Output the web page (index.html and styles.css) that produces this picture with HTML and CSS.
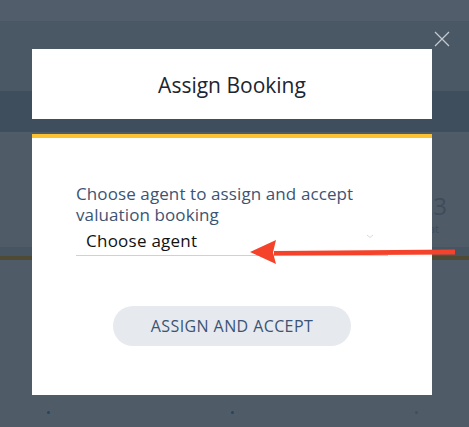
FILE: index.html
```html
<!DOCTYPE html>
<html lang="en">
<head>
    <meta charset="UTF-8">
    <meta name="viewport" content="width=device-width, initial-scale=1.0">
    <title>Assign Booking</title>
    <link rel="stylesheet" href="styles.css">
</head>
<body>
    <div id="page">
        <div class="topbar"></div>
        <div class="subbar"></div>
        <div class="strip"></div>
        <div class="content">
            <div class="stat">
                <span class="stat-num">23</span>
                <span class="stat-label">at</span>
            </div>
        </div>
        <div class="rule"></div>
        <div class="olive"></div>
        <div class="footer">
            <span class="dot"></span>
            <span class="dot"></span>
            <span class="dot dim"></span>
        </div>
    </div>

    <button class="close" aria-label="Close">
        <svg width="16" height="16" viewBox="0 0 16 16">
            <path d="M1 1 L15 15 M15 1 L1 15" stroke="#c3c9d0" stroke-width="1.3" fill="none"/>
        </svg>
    </button>

    <div class="modal">
        <div class="modal-header">
            <h1>Assign Booking</h1>
        </div>
        <div class="modal-body">
            <label for="agent">Choose agent to assign and accept valuation booking</label>
            <div class="select">
                <span>Choose agent</span>
                <svg width="8" height="5" viewBox="0 0 8 5">
                    <path d="M1 1 L4 3.5 L7 1" stroke="#d6dbe1" stroke-width="1" fill="none"/>
                </svg>
            </div>
            <div class="actions">
                <button type="button" class="assignbtn">ASSIGN AND ACCEPT</button>
            </div>
        </div>
    </div>

    <!-- annotation arrow -->
    <svg class="arrow" width="210" height="30" viewBox="0 0 210 30">
        <path d="M24 13 L205 11.5 L205 16.5 L24 17.5 Z" fill="#f5432b"/>
        <path d="M0 14 L26 2 L23 14.5 L26 26 Z" fill="#f5432b"/>
    </svg>
</body>
</html>
```

FILE: styles.css
```css
* {
    margin: 0;
    padding: 0;
    box-sizing: border-box;
}

body {
    font-family: "Open Sans", Arial, sans-serif;
    background-color: #4f5b67;
    width: 469px;
    height: 427px;
    overflow: hidden;
    position: relative;
}

#page {
    display: flex;
    flex-direction: column;
}

.topbar {
    height: 21px;
    background-color: #515d6a;
}

.subbar {
    height: 70px;
    background-color: #4a5765;
}

.strip {
    height: 41px;
    background-color: #3f4e5c;
}

.content {
    height: 115px;
    background-color: #4f5b67;
    display: flex;
    justify-content: flex-end;
    padding: 60px 22px 0 0;
}

.stat {
    display: flex;
    flex-direction: column;
    align-items: flex-end;
    gap: 3px;
    color: #3f4c5a;
}

.stat-num {
    font-size: 24px;
    line-height: 28px;
}

.stat-label {
    font-size: 11px;
    line-height: 12px;
    margin-right: 8px;
}

.rule {
    height: 9px;
    background-color: #475563;
}

.olive {
    height: 4px;
    background-color: #4e4a34;
}

.footer {
    display: flex;
    justify-content: space-between;
    padding: 151px 51px 0 47px;
}

.dot {
    width: 3px;
    height: 3px;
    border-radius: 50%;
    background-color: #1f4868;
}

.dot.dim {
    background-color: #3f5061;
}

.close {
    position: absolute;
    top: 31px;
    left: 434px;
    background: none;
    border: none;
    width: 16px;
    height: 16px;
    cursor: pointer;
}

.modal {
    position: absolute;
    top: 49px;
    left: 32px;
    width: 400px;
}

.modal-header {
    height: 70px;
    background-color: white;
    display: flex;
    align-items: center;
    justify-content: center;
    margin-bottom: 15px;
}

.modal-header h1 {
    font-size: 21px;
    font-weight: normal;
    color: #1d2530;
    padding-top: 1px;
}

.modal-body {
    background-color: white;
    border-top: 4px solid #fbc232;
    height: 261px;
    padding: 45px 44px 0 44px;
}

label {
    display: block;
    font-size: 17px;
    line-height: 21px;
    letter-spacing: 0.1px;
    color: #3c5474;
}

.select {
    height: 31px;
    display: flex;
    align-items: center;
    justify-content: space-between;
    padding: 1px 14px 0 10px;
    border-bottom: 1px solid #cdd2d9;
    font-size: 17px;
    letter-spacing: 0.25px;
    color: #111;
}

.select svg {
    margin-top: -8px;
}

.actions {
    display: flex;
    justify-content: center;
    margin-top: 50px;
}

.assignbtn {
    width: 238px;
    height: 40px;
    border: none;
    border-radius: 20px;
    background-color: #e6e9ee;
    color: #3c5474;
    font-family: "Open Sans", Arial, sans-serif;
    font-size: 16px;
    letter-spacing: 0.4px;
    cursor: pointer;
}

.arrow {
    position: absolute;
    left: 250px;
    top: 238px;
}
```
